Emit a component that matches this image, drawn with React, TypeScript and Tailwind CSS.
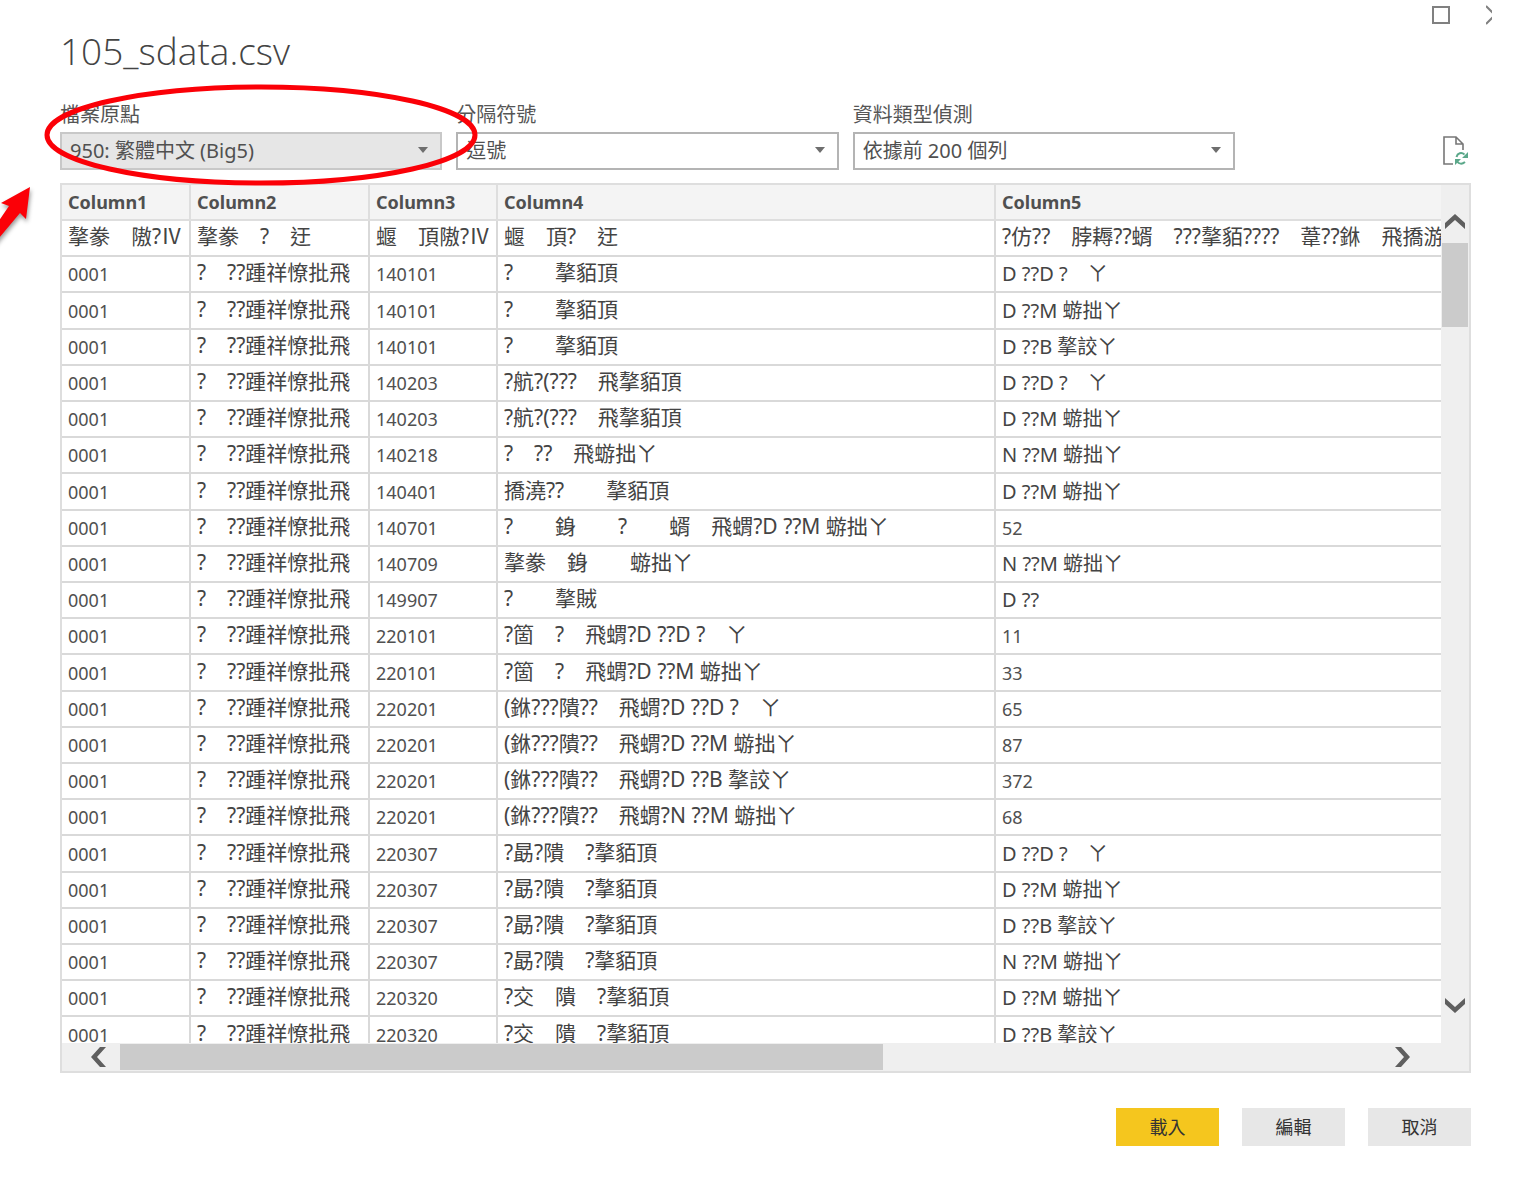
import React from 'react';

// Blank double-width glyph shown for bytes that cannot be decoded
const _ = '\u3000';

const SCHOOL = `?${_}??踵祥憭批飛`;

const columns = ['Column1', 'Column2', 'Column3', 'Column4', 'Column5'];

const firstRow = [
  `摮豢${_}隞?Ⅳ`,
  `摮豢${_}?${_}迂`,
  `蝘${_}頂隞?Ⅳ`,
  `蝘${_}頂?${_}迂`,
  `?仿??${_}脖耨??蝑${_}???摮貊????${_}葦??銝${_}飛撟游`,
];

const D = `D ??D ?${_}ㄚ`;
const M = 'D ??M 蝣拙ㄚ';
const B = 'D ??B 摮詨ㄚ';
const N = 'N ??M 蝣拙ㄚ';

const rows: [string, string, string][] = [
  ['140101', `?${_}${_}摮貊頂`, D],
  ['140101', `?${_}${_}摮貊頂`, M],
  ['140101', `?${_}${_}摮貊頂`, B],
  ['140203', `?航?(???${_}飛摮貊頂`, D],
  ['140203', `?航?(???${_}飛摮貊頂`, M],
  ['140218', `?${_}??${_}飛蝣拙ㄚ`, N],
  ['140401', `撟澆??${_}${_}摮貊頂`, M],
  ['140701', `?${_}${_}銵${_}${_}?${_}${_}蝑${_}飛蝟?${M}`, '52'],
  ['140709', `摮豢${_}銵${_}${_}蝣拙ㄚ`, N],
  ['149907', `?${_}${_}摮賊`, 'D ??'],
  ['220101', `?箇${_}?${_}飛蝟?${D}`, '11'],
  ['220101', `?箇${_}?${_}飛蝟?${M}`, '33'],
  ['220201', `(銝???隤??${_}飛蝟?${D}`, '65'],
  ['220201', `(銝???隤??${_}飛蝟?${M}`, '87'],
  ['220201', `(銝???隤??${_}飛蝟?${B}`, '372'],
  ['220201', `(銝???隤??${_}飛蝟?${N}`, '68'],
  ['220307', `?勗?隤${_}?摮貊頂`, D],
  ['220307', `?勗?隤${_}?摮貊頂`, M],
  ['220307', `?勗?隤${_}?摮貊頂`, B],
  ['220307', `?勗?隤${_}?摮貊頂`, N],
  ['220320', `?交${_}隤${_}?摮貊頂`, M],
  ['220320', `?交${_}隤${_}?摮貊頂`, B],
];

const variants = {
  number: 'text-lg leading-6 text-[#505050]',
  garbled: 'pb-[4px] text-[21px] leading-6 text-[#444]',
  degree: 'text-xl leading-6 text-[#444]',
};

function Field({ id, label, value, muted }: { id: string; label: string; value: string; muted?: boolean }) {
  return (
    <div>
      <label htmlFor={id} className="block h-7 text-xl leading-7 text-[#555]">
        {label}
      </label>
      <div className="relative mt-[3px]">
        <select
          id={id}
          className={`block h-[38px] w-full appearance-none rounded-none border-2 pl-2 text-xl leading-7 text-[#505050] ${
            muted ? 'border-[#c8c8c8] bg-[#e6e6e6]' : 'border-[#b4b4b4] bg-white'
          }`}
        >
          <option>{value}</option>
        </select>
        <svg className="pointer-events-none absolute top-[15px] right-[14px] h-[6px] w-[10px]" viewBox="0 0 10 6">
          <path d="M0 0h10L5 6z" fill="#6e6e6e" />
        </svg>
      </div>
    </div>
  );
}

function ScrollArrow({ label, d }: { label: string; d: string }) {
  return (
    <button aria-label={label} className="flex h-6 w-6 shrink-0 items-center justify-center">
      <svg viewBox="0 0 24 24" className="h-6 w-6" fill="#5f5f5f">
        <path d={d} />
      </svg>
    </button>
  );
}

function PreviewCell({ value, variant }: { value: string; variant: keyof typeof variants }) {
  return (
    <td
      className={`h-9 overflow-hidden border-r-2 border-b-2 border-[#d9d9d9] pl-[6px] whitespace-pre last:border-r-0 ${variants[variant]}`}
    >
      {value}
    </td>
  );
}

export default function App() {
  return (
    <div className="relative min-h-screen overflow-hidden bg-white pr-[45px] pl-[60px] font-['Noto_Sans','Noto_Sans_CJK_TC',sans-serif] text-[#505050]">
      <header>
        <div className="-mr-[21px] flex h-[30px] items-center justify-end gap-[36px]">
          <button aria-label="Maximize" className="h-[18px] w-[18px] border-2 border-[#808080]" />
          <button aria-label="Close" className="h-5 w-[6px] overflow-hidden">
            <svg viewBox="0 0 6 20" className="h-5 w-[6px]" fill="none" stroke="#808080" strokeWidth="2">
              <path d="M0 1l9 9-9 9" />
            </svg>
          </button>
        </div>
        <h1 className="h-[71px] font-['Open_Sans','Noto_Sans',sans-serif] text-[37px] leading-[42px] font-light text-[#444]">
          105_sdata.csv
        </h1>
      </header>

      <div className="grid grid-cols-[1fr_1fr_1fr_222px] gap-x-[14px]">
        <Field id="origin" label="檔案原點" value="950: 繁體中文 (Big5)" muted />
        <Field id="delimiter" label="分隔符號" value="逗號" />
        <Field id="detection" label="資料類型偵測" value="依據前 200 個列" />
        <div className="flex items-end justify-end pb-1">
          <button aria-label="Refresh preview" className="h-[30px] w-7">
            <svg viewBox="0 0 28 30" className="h-[30px] w-7" fill="none">
              <path d="M10 28H1V1h12l7 7v6M13 1v7h7" stroke="#777" strokeWidth="1.6" />
              <path d="M13.500 21c1-4 5-5 8-2.500M22 26c-3 2.500-6 2-8-.5" stroke="#5ba88a" strokeWidth="2" />
              <path d="M25 16v6h-6zM12 29v-6h6z" fill="#5ba88a" />
            </svg>
          </button>
        </div>
      </div>

      <section className="mt-[13px] border-2 border-[#dedede] bg-[#efefef]">
        <div className="flex">
          <div className="h-[858px] min-w-0 flex-1 overflow-hidden bg-white">
            <table className="h-[869px] w-full table-fixed border-separate border-spacing-0">
              <colgroup>
                <col className="w-[129px]" />
                <col className="w-[179px]" />
                <col className="w-[128px]" />
                <col className="w-[498px]" />
                <col />
              </colgroup>
              <thead>
                <tr>
                  {columns.map((name) => (
                    <th
                      key={name}
                      className="h-9 border-r-2 border-b-2 border-[#dedede] bg-[#f4f4f4] pl-[6px] text-left text-lg leading-6 font-bold last:border-r-0"
                    >
                      {name}
                    </th>
                  ))}
                </tr>
              </thead>
              <tbody>
                <tr>
                  {firstRow.map((value, i) => (
                    <PreviewCell key={i} value={value} variant="garbled" />
                  ))}
                </tr>
                {rows.map(([code, dept, degree], i) => (
                  <tr key={i}>
                    <PreviewCell value="0001" variant="number" />
                    <PreviewCell value={SCHOOL} variant="garbled" />
                    <PreviewCell value={code} variant="number" />
                    <PreviewCell value={dept} variant="garbled" />
                    <PreviewCell value={degree} variant={/^\d+$/.test(degree) ? 'number' : 'degree'} />
                  </tr>
                ))}
              </tbody>
            </table>
          </div>
          <div className="flex w-[28px] flex-col items-center pt-[24px] pb-[25px]">
            <ScrollArrow label="Scroll up" d="M12 5l10 9v6l-10-9-10 9v-6z" />
            <div className="mt-[10px] h-[84px] w-[26px] bg-[#cbcbcb]" />
            <div className="flex-1" />
            <ScrollArrow label="Scroll down" d="M12 19L2 10V4l10 9 10-9v6z" />
          </div>
        </div>
        <div className="flex h-[28px] items-center pr-[54px] pl-[24px]">
          <ScrollArrow label="Scroll left" d="M5 12l9-10h6l-9 10 9 10h-6z" />
          <div className="ml-[10px] flex flex-1">
            <div className="h-[26px] w-[60%] bg-[#cbcbcb]" />
            <div className="w-3" />
          </div>
          <ScrollArrow label="Scroll right" d="M19 12L10 2H4l9 10-9 10h6z" />
        </div>
      </section>

      <footer className="mt-[35px] flex justify-end gap-[23px] pb-9 text-lg leading-6 text-[#333]">
        <button className="h-[38px] w-[103px] bg-[#f5c61e]">載入</button>
        <button className="h-[38px] w-[103px] bg-[#e7e7e7]">編輯</button>
        <button className="h-[38px] w-[103px] bg-[#e7e7e7]">取消</button>
      </footer>

      {/* Red callout drawn over the file origin field */}
      <svg className="pointer-events-none absolute top-0 left-0 h-[260px] w-[500px]" viewBox="0 0 500 260" fill="none">
        <ellipse cx="261" cy="135" rx="214" ry="48" stroke="#fb0007" strokeWidth="5" />
        <path
          d="M30 187L1 203l8 3L-6 228v16L20 213l6 6z"
          fill="#fb0007"
          className="drop-shadow-[1px_3px_2px_rgba(0,0,0,0.4)]"
        />
      </svg>
    </div>
  );
}
